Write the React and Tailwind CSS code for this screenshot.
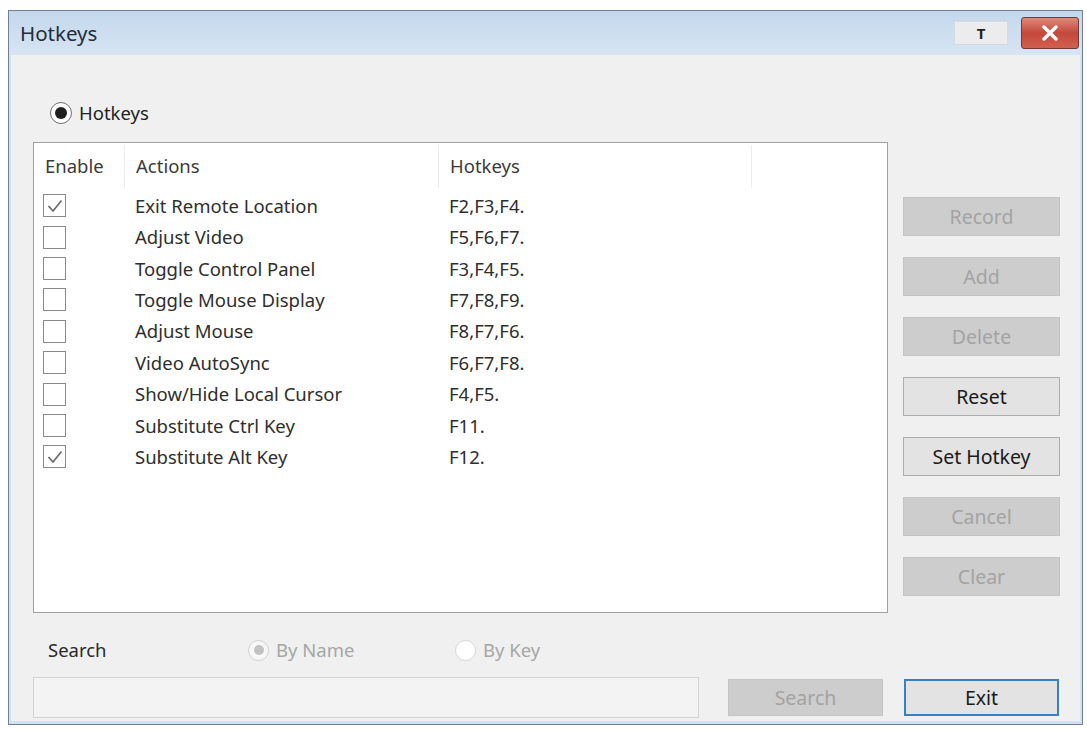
import React from 'react';

const ROWS = [
  { on: true, action: 'Exit Remote Location', keys: 'F2,F3,F4.' },
  { on: false, action: 'Adjust Video', keys: 'F5,F6,F7.' },
  { on: false, action: 'Toggle Control Panel', keys: 'F3,F4,F5.' },
  { on: false, action: 'Toggle Mouse Display', keys: 'F7,F8,F9.' },
  { on: false, action: 'Adjust Mouse', keys: 'F8,F7,F6.' },
  { on: false, action: 'Video AutoSync', keys: 'F6,F7,F8.' },
  { on: false, action: 'Show/Hide Local Cursor', keys: 'F4,F5.' },
  { on: false, action: 'Substitute Ctrl Key', keys: 'F11.' },
  { on: true, action: 'Substitute Alt Key', keys: 'F12.' },
];

const SIDE_BUTTONS = [
  { label: 'Record', enabled: false },
  { label: 'Add', enabled: false },
  { label: 'Delete', enabled: false },
  { label: 'Reset', enabled: true },
  { label: 'Set Hotkey', enabled: true },
  { label: 'Cancel', enabled: false },
  { label: 'Clear', enabled: false },
];

const Checkbox = ({ checked }) => (
  <div className="w-[23px] h-[23px] border-[1.5px] border-[#8a8a8a] bg-white flex items-center justify-center">
    {checked && (
      <svg width="18" height="18" viewBox="0 0 18 18" fill="none">
        <path d="M2.5 9 L7 14 L15.5 3.5" stroke="#6a6a6a" strokeWidth="1.7" />
      </svg>
    )}
  </div>
);

const WinButton = ({ label, enabled }) => (
  <button
    className={
      enabled
        ? 'w-[157px] h-[39px] bg-[#e3e3e3] border border-[#adadad] text-[#1a1a1a] text-[19.5px]'
        : 'w-[157px] h-[39px] bg-[#cdcdcd] border border-[#c4c4c4] text-[#a3a3a3] text-[19.5px]'
    }
  >
    {label}
  </button>
);

const App = () => {
  return (
    <div
      className="w-[1087px] h-[729px] bg-white pt-[10px] pl-[8px]"
      style={{ fontFamily: '"Noto Sans", "Open Sans", sans-serif' }}
    >
      <div className="w-[1075px] h-[715px] border border-[#6f7f92] bg-[#d3e2f2] flex flex-col">
        {/* Title bar */}
        <div className="h-[44px] flex items-center justify-between pl-[11px] pr-[3px] bg-gradient-to-b from-[#c3d7ec] to-[#d7e5f3]">
          <span className="text-[20.5px] text-[#1f2d3d]">Hotkeys</span>
          <div className="flex items-center gap-[13px]">
            <div className="w-[54px] h-[24px] bg-[#ececec] border border-[#d3dbe3] flex items-center justify-center text-[15px] font-bold text-[#222]">
              T
            </div>
            <div className="w-[58px] h-[32px] rounded-[3px] border border-[#6b3a3a] bg-gradient-to-b from-[#dc8a7c] via-[#c4473b] to-[#d0604f] flex items-center justify-center">
              <svg width="18" height="16" viewBox="0 0 18 16">
                <path d="M3 2 L15 14 M15 2 L3 14" stroke="#fff" strokeWidth="3.4" strokeLinecap="round" />
              </svg>
            </div>
          </div>
        </div>

        {/* Client area */}
        <div className="flex-1 mx-[2px] mb-[3px] bg-[#f0f0f0] flex flex-col pl-[22px]">
          {/* Top radio */}
          <div className="mt-[46px] h-[24px] flex items-center gap-[7px] pl-[17px]">
            <div className="w-[22px] h-[22px] rounded-full border-[1.5px] border-[#6f6f6f] bg-white flex items-center justify-center">
              <div className="w-[12px] h-[12px] rounded-full bg-[#1f1f1f]" />
            </div>
            <span className="text-[18.5px] text-[#222]">Hotkeys</span>
          </div>

          {/* Table + side buttons */}
          <div className="mt-[17px] flex gap-[15px]">
            <div className="w-[855px] h-[471px] border-[1.5px] border-[#a0a0a0] bg-white text-[18.5px] text-[#2e2e2e]">
              {/* Header */}
              <div className="h-[47px] flex">
                <div className="w-[90px] pl-[11px] pt-[9px] text-[#3a3a3a]">Enable</div>
                <div className="w-px my-[2px] bg-[#ececec]" />
                <div className="w-[313px] pl-[11px] pt-[9px] text-[#3a3a3a]">Actions</div>
                <div className="w-px my-[2px] bg-[#ececec]" />
                <div className="w-[312px] pl-[11px] pt-[9px] text-[#3a3a3a]">Hotkeys</div>
                <div className="w-px my-[2px] bg-[#ececec]" />
              </div>
              {/* Rows */}
              {ROWS.map((r) => (
                <div key={r.action} className="h-[31.4px] flex items-center">
                  <div className="w-[90px] pl-[9px]">
                    <Checkbox checked={r.on} />
                  </div>
                  <div className="w-[314px] pl-[11px]">{r.action}</div>
                  <div className="pl-[11px]">{r.keys}</div>
                </div>
              ))}
            </div>

            <div className="pt-[55px] flex flex-col gap-[21px]">
              {SIDE_BUTTONS.map((b) => (
                <WinButton key={b.label} label={b.label} enabled={b.enabled} />
              ))}
            </div>
          </div>

          {/* Search options */}
          <div className="mt-[25px] h-[24px] flex items-center text-[18.5px]">
            <span className="w-[215px] pl-[15px] text-[#2a2a2a]">Search</span>
            <div className="flex items-center gap-[7px] w-[207px]">
              <div className="w-[21px] h-[21px] rounded-full border border-[#d0d0d0] bg-[#f7f7f7] flex items-center justify-center">
                <div className="w-[10px] h-[10px] rounded-full bg-[#c2c2c2]" />
              </div>
              <span className="text-[#a6a6a6]">By Name</span>
            </div>
            <div className="flex items-center gap-[7px]">
              <div className="w-[21px] h-[21px] rounded-full border border-[#d6d6d6] bg-white" />
              <span className="text-[#a6a6a6]">By Key</span>
            </div>
          </div>

          {/* Search input + buttons */}
          <div className="mt-[15px] flex items-center">
            <div className="w-[666px] h-[41px] border border-[#d4d4d4] bg-[#f3f3f3]" />
            <button className="ml-[29px] w-[155px] h-[37px] bg-[#cdcdcd] border border-[#c4c4c4] text-[#a3a3a3] text-[19.5px]">
              Search
            </button>
            <button className="ml-[21px] w-[155px] h-[37px] bg-[#e3e3e3] border-2 border-[#3a7fc1] text-[#1a1a1a] text-[19.5px]">
              Exit
            </button>
          </div>
        </div>
      </div>
    </div>
  );
};

export default App;
